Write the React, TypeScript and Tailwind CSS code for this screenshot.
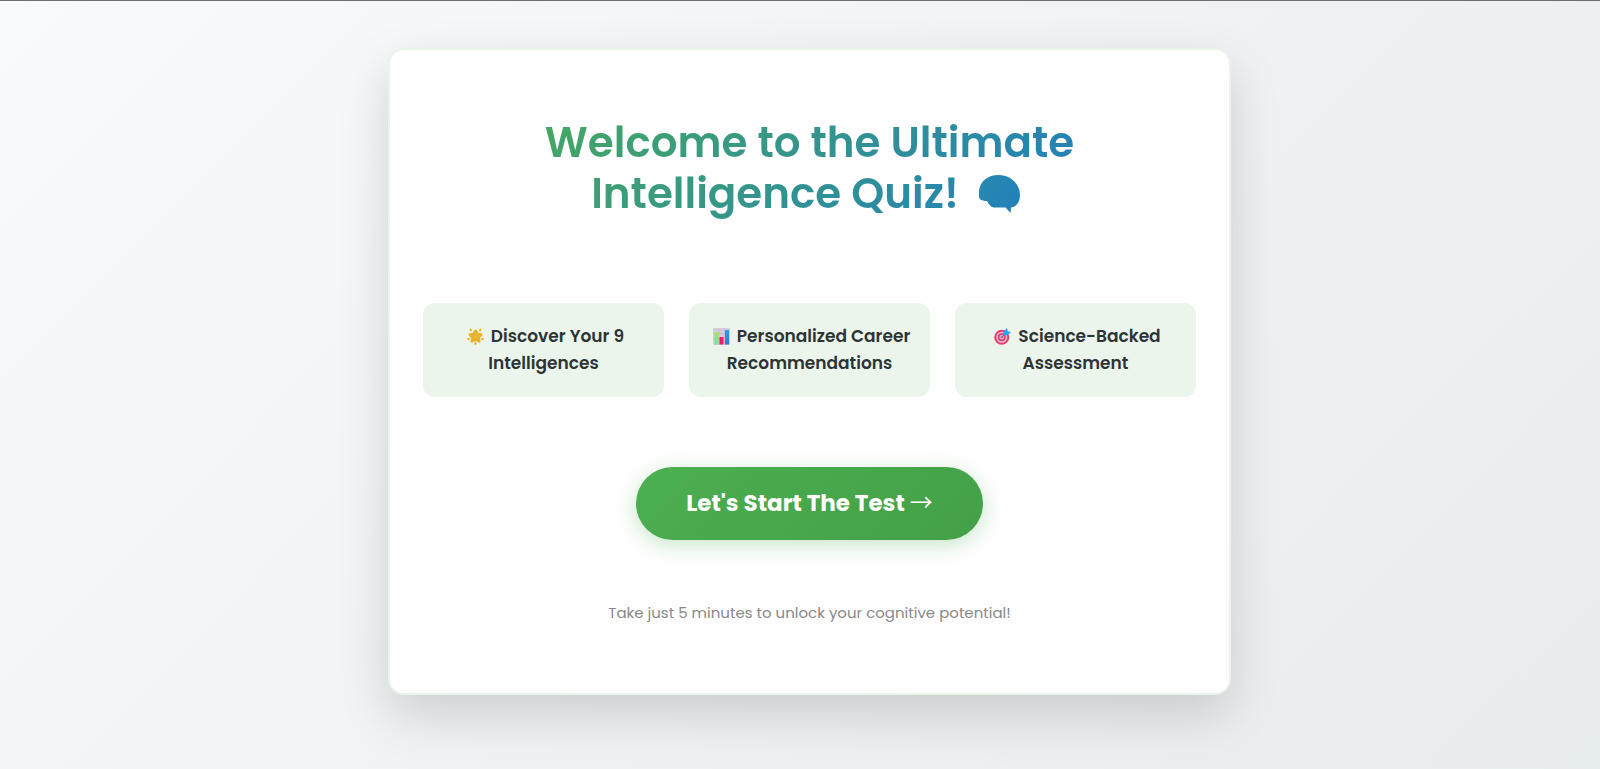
import type { ReactNode } from 'react';

// Ikon bintang
const StarIcon = () => (
  <svg viewBox="0 0 34 34" className="inline-block w-[17px] h-[17px] ml-1 mr-[7px] align-[-3px]" aria-hidden="true">
    <path
      d="M17 6l3.600 6.600 7.400 1-5.200 5.400 1.400 7.400-7.200-3.400-7.200 3.400 1.400-7.400L6 13.600l7.400-1z"
      fill="#ecb92f"
      stroke="#e8b32e"
      strokeWidth="6"
      strokeLinejoin="round"
    />
    <g fill="#f2b51f">
      <ellipse cx="7.500" cy="4" rx="2.200" ry="3" transform="rotate(-30 7.500 4)" />
      <ellipse cx="26.500" cy="4" rx="2.200" ry="3" transform="rotate(30 26.500 4)" />
      <ellipse cx="3" cy="22" rx="3" ry="2.200" transform="rotate(-15 3 22)" />
      <ellipse cx="31" cy="22" rx="3" ry="2.200" transform="rotate(15 31 22)" />
      <ellipse cx="17" cy="31" rx="2.300" ry="3" />
    </g>
  </svg>
);

// Ikon grafik batang
const ChartIcon = () => (
  <svg viewBox="0 0 34 34" className="inline-block w-[17px] h-[17px] ml-1 mr-[7px] align-[-3px]" aria-hidden="true">
    <defs>
      <linearGradient id="barGreen" x1="0" y1="0" x2="0" y2="1">
        <stop offset="0" stopColor="#a5e858" />
        <stop offset="1" stopColor="#6fe7a0" />
      </linearGradient>
      <linearGradient id="barBlue" x1="0" y1="0" x2="0" y2="1">
        <stop offset="0" stopColor="#2f9fe6" />
        <stop offset="1" stopColor="#3b6fe0" />
      </linearGradient>
    </defs>
    <rect x="0" y="0" width="34" height="34" rx="2" fill="#d3ccdb" />
    <path d="M1 11h32M1 22h32M12 1v32M23 1v32" stroke="#b9b0c4" strokeWidth="1" />
    <rect x="3" y="8" width="8" height="25" rx="1" fill="url(#barGreen)" />
    <rect x="13" y="18" width="8" height="15" rx="1" fill="#ea1f6d" />
    <rect x="24" y="4" width="8" height="29" rx="1" fill="url(#barBlue)" />
  </svg>
);

// Ikon target dengan anak panah
const TargetIcon = () => (
  <svg viewBox="0 0 34 34" className="inline-block w-[17px] h-[17px] ml-1 mr-[7px] align-[-3px]" aria-hidden="true">
    <circle cx="15.500" cy="18.500" r="15" fill="#e83a6b" />
    <circle cx="15.500" cy="18.500" r="11" fill="#dcc3d4" />
    <circle cx="15.500" cy="18.500" r="8" fill="#e23c70" />
    <circle cx="15.500" cy="18.500" r="4.500" fill="#d9bccf" />
    <circle cx="15.500" cy="18.500" r="2" fill="#dc3e73" />
    <path d="M15.500 18.500L25 9" stroke="#5b6f9a" strokeWidth="2" />
    <path d="M19 14.500V7l7-7 1.500 6.500L34 8l-7 6.500z" fill="#2f9df0" />
  </svg>
);

// Siluet otak, warnanya melanjutkan gradasi judul
const BrainIcon = () => (
  <svg viewBox="0 0 41 38" className="inline-block w-[41px] h-[38px] ml-5 mr-2 align-[-5px]" aria-hidden="true">
    <defs>
      <linearGradient id="brainFill" x1="0" y1="0" x2="1" y2="1">
        <stop offset="0" stopColor="#2889ae" />
        <stop offset="1" stopColor="#227fbb" />
      </linearGradient>
    </defs>
    <path
      d="M0 16C1 6 9 0 19.500 0 31 0 41 8 41 20.500c0 6-3 11-9 12l-.5 5.500-5-5.500H15.500c-3 0-5-2-7.500-6.500C3.500 26 0 24.500 0 21.500z"
      fill="url(#brainFill)"
    />
  </svg>
);

const Fitur = ({ icon, children }: { icon: ReactNode; children: ReactNode }) => (
  <li className="rounded-xl bg-[#ebf5ec] px-4 py-5 text-center text-[17px] leading-[27px] font-semibold text-[#2d3436]">
    {icon}
    {children}
  </li>
);

export default function App() {
  return (
    <div className="min-h-screen border-t border-[#706c70] bg-[linear-gradient(135deg,#f8fafc_0%,#eeeff2_70%,#e8edf0_100%)] pt-[47px] pr-5 pb-[73px] pl-[39px] font-['Poppins','Inter',sans-serif]">
      <main className="mx-auto w-full max-w-[843px] rounded-2xl border-2 border-[#e9f4ea] bg-[#fefefe] px-[33px] pt-[67px] pb-[67px] text-center shadow-[0_20px_50px_rgba(0,0,0,0.15)]">
        {/* JUDUL */}
        <h1 className="bg-[linear-gradient(135deg,#4caf50,#1976d2)] bg-clip-text pb-1 text-[42px] leading-[51px] font-semibold text-transparent">
          Welcome to the Ultimate Intelligence Quiz!
          <BrainIcon />
        </h1>

        {/* DAFTAR FITUR */}
        <ul className="mt-20 grid grid-cols-3 gap-[25px]">
          <Fitur icon={<StarIcon />}>Discover Your 9 Intelligences</Fitur>
          <Fitur icon={<ChartIcon />}>Personalized Career Recommendations</Fitur>
          <Fitur icon={<TargetIcon />}>Science-Backed Assessment</Fitur>
        </ul>

        {/* TOMBOL MULAI */}
        <button
          type="button"
          className="mt-[70px] cursor-pointer rounded-full bg-[linear-gradient(135deg,#4caf50,#43a047)] px-[50px] py-5 text-[23px] leading-[33px] font-bold text-white shadow-[0_5px_20px_rgba(76,175,80,0.3)]"
        >
          Let&apos;s Start The Test <span className="font-['Noto_Sans_CJK_JP',sans-serif] leading-none font-normal">→</span>
        </button>

        <p className="mt-[60px] text-[15px] leading-[26px] text-[#888888]">
          Take just 5 minutes to unlock your cognitive potential!
        </p>
      </main>
    </div>
  );
}
